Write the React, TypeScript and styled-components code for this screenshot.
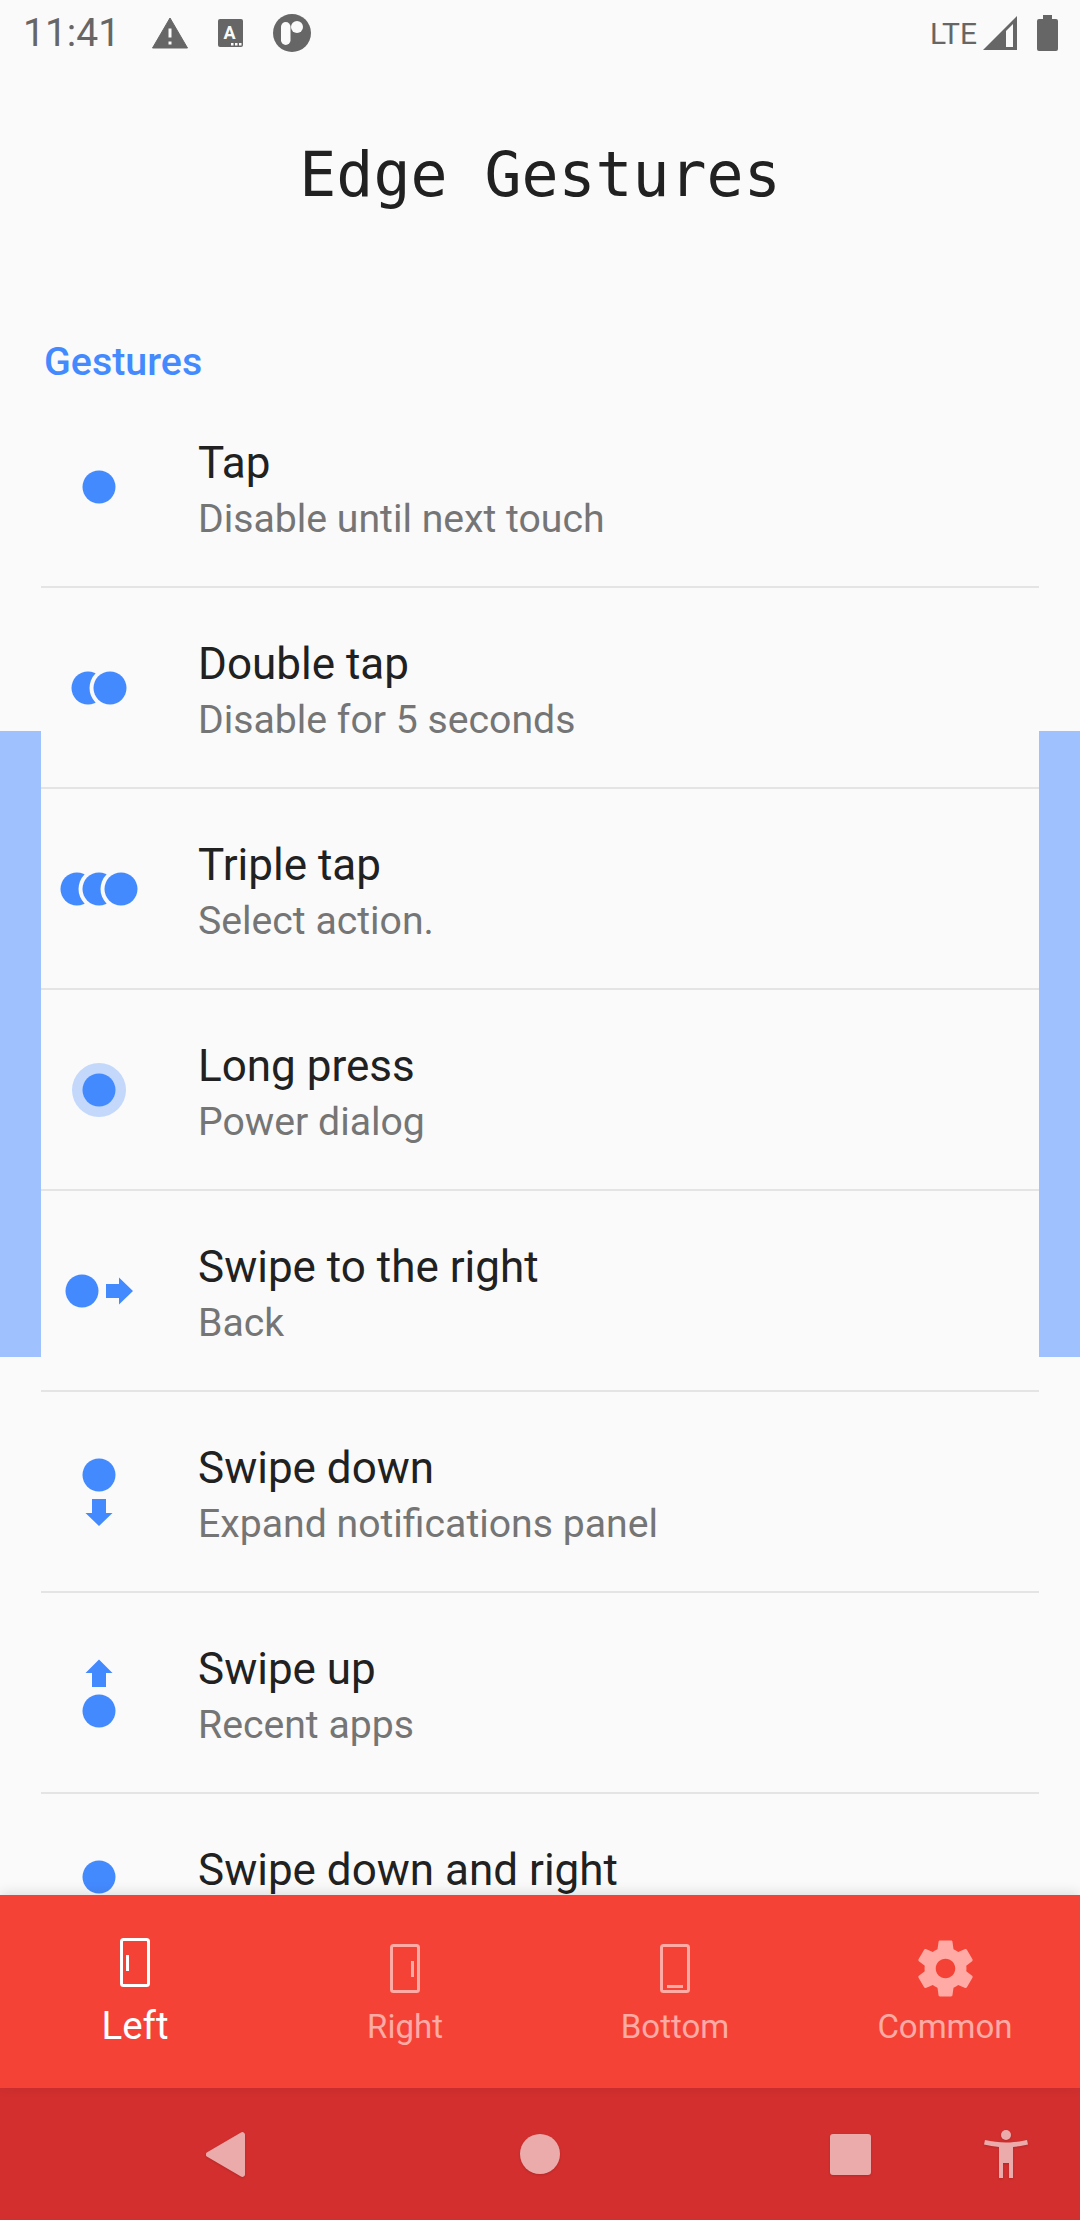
import { FC, ReactNode } from 'react';
import styled, { createGlobalStyle } from 'styled-components';

const BLUE = '#448aff';
const NAV_ICON = '#ebabab';

const GlobalStyle = createGlobalStyle`
	html, body {
		margin: 0;
		padding: 0;
		background: #fafafa;
	}
	body {
		font-family: Roboto, "Liberation Sans", sans-serif;
	}
`;

interface IGesture {
	title: string;
	subtitle?: string;
	icon: ReactNode;
}

const Dot: FC<{cx: number; cy: number}> = ({cx, cy}) => <circle cx={cx} cy={cy} r="16.5"/>;

const GapDot: FC<{cx: number; cy: number}> = ({cx, cy}) => (
	<>
		<circle cx={cx} cy={cy} r="20.5" fill="#fafafa"/>
		<circle cx={cx} cy={cy} r="16.5"/>
	</>
);

const gestures: IGesture[] = [
	{title: 'Tap', subtitle: 'Disable until next touch', icon: <Dot cx={40} cy={40}/>},
	{
		title: 'Double tap',
		subtitle: 'Disable for 5 seconds',
		icon: <><Dot cx={29} cy={40}/><GapDot cx={51} cy={40}/></>,
	},
	{
		title: 'Triple tap',
		subtitle: 'Select action.',
		icon: <><Dot cx={18} cy={40}/><GapDot cx={40} cy={40}/><GapDot cx={62} cy={40}/></>,
	},
	{
		title: 'Long press',
		subtitle: 'Power dialog',
		icon: <><circle cx="40" cy="40" r="27" opacity="0.3"/><Dot cx={40} cy={40}/></>,
	},
	{
		title: 'Swipe to the right',
		subtitle: 'Back',
		icon: <><Dot cx={23} cy={40}/><path d="M47 33h13v-6.500L74 40 60 53.500V47H47z"/></>,
	},
	{
		title: 'Swipe down',
		subtitle: 'Expand notifications panel',
		icon: <><Dot cx={40} cy={23}/><path d="M33 47h14v14h6.500L40 74 26.500 61H33z"/></>,
	},
	{
		title: 'Swipe up',
		subtitle: 'Recent apps',
		icon: <><path d="M33 34h14V20h6.500L40 6.500 26.500 20H33z"/><Dot cx={40} cy={58}/></>,
	},
	{title: 'Swipe down and right', icon: <Dot cx={40} cy={23}/>},
];

const App: FC = () => (
	<Screen>
		<GlobalStyle/>
		<StatusBar>
			<StatusGroup>
				<Clock>11:41</Clock>
				<NotificationIcons>
					<svg width="36" height="32" viewBox="0 0 36 32" fill="#666">
						<path fillRule="evenodd" d="M18 1 35.500 31H.5zM16 11v10h4V11zM16 24v4h4v-4z" strokeLinejoin="round" stroke="#666" strokeWidth="1"/>
					</svg>
					<svg width="25" height="28" viewBox="0 0 25 28">
						<rect width="25" height="28" rx="2" fill="#666"/>
						<text x="11.500" y="20" fontSize="18" fontWeight="700" fontFamily="Roboto" textAnchor="middle" fill="#fafafa">A</text>
						<rect x="13" y="24" width="2.500" height="2.500" fill="#fafafa"/>
						<rect x="17" y="24" width="2.500" height="2.500" fill="#fafafa"/>
						<rect x="21" y="24" width="2.500" height="2.500" fill="#fafafa"/>
					</svg>
					<svg width="38" height="38" viewBox="0 0 38 38">
						<circle cx="19" cy="19" r="19" fill="#666"/>
						<rect x="8" y="8" width="9.500" height="23" rx="4.750" fill="#fafafa"/>
						<circle cx="24" cy="13" r="6" fill="#fafafa"/>
					</svg>
				</NotificationIcons>
			</StatusGroup>
			<StatusGroup>
				<NetworkLabel>LTE</NetworkLabel>
				<SignalIcon width="34" height="34" viewBox="0 0 34 34">
					<path d="M34 0v34H0z" fill="#666"/>
					<path d="M23 15 30 8v23h-7z" fill="#fafafa"/>
				</SignalIcon>
				<BatteryIcon width="21" height="36" viewBox="0 0 21 36" fill="#666">
					<path d="M6 0h9v4h4a2 2 0 0 1 2 2v28a2 2 0 0 1-2 2H2a2 2 0 0 1-2-2V6a2 2 0 0 1 2-2h4z"/>
				</BatteryIcon>
			</StatusGroup>
		</StatusBar>
		<Content>
			<Title>Edge Gestures</Title>
			<SectionHeader>Gestures</SectionHeader>
			<GestureList>
				{gestures.map((gesture) => (
					<GestureRow key={gesture.title}>
						<GestureIcon viewBox="0 0 80 80" fill={BLUE}>
							{gesture.icon}
						</GestureIcon>
						<GestureText>
							<GestureTitle>{gesture.title}</GestureTitle>
							<GestureSubtitle>{gesture.subtitle}</GestureSubtitle>
						</GestureText>
					</GestureRow>
				))}
			</GestureList>
			<EdgeHighlight $side="left"/>
			<EdgeHighlight $side="right"/>
		</Content>
		<TabBar>
			<Tab $active>
				<TabIcon $active width="30" height="49" viewBox="0 0 30 49">
					<rect x="1.500" y="1.500" width="27" height="46" rx="2" fill="none" stroke="currentColor" strokeWidth="3"/>
					<rect x="6" y="17" width="3" height="16" fill="currentColor"/>
				</TabIcon>
				<TabLabel $active>Left</TabLabel>
			</Tab>
			<Tab>
				<TabIcon width="30" height="49" viewBox="0 0 30 49">
					<rect x="1.500" y="1.500" width="27" height="46" rx="2" fill="none" stroke="currentColor" strokeWidth="3"/>
					<rect x="21" y="17" width="3" height="16" fill="currentColor"/>
				</TabIcon>
				<TabLabel>Right</TabLabel>
			</Tab>
			<Tab>
				<TabIcon width="30" height="49" viewBox="0 0 30 49">
					<rect x="1.500" y="1.500" width="27" height="46" rx="2" fill="none" stroke="currentColor" strokeWidth="3"/>
					<rect x="7" y="41" width="16" height="3" fill="currentColor"/>
				</TabIcon>
				<TabLabel>Bottom</TabLabel>
			</Tab>
			<Tab>
				<GearIcon width="67" height="67" viewBox="0 0 24 24">
					<path fill="currentColor" d="M19.430 12.980c.04-.32.07-.64.07-.98s-.03-.66-.07-.98l2.110-1.650c.19-.15.24-.42.12-.64l-2-3.460c-.12-.22-.39-.3-.61-.22l-2.490 1c-.52-.4-1.080-.73-1.690-.98l-.38-2.650C14.460 2.180 14.250 2 14 2h-4c-.25 0-.46.18-.49.42l-.38 2.650c-.61.25-1.170.59-1.690.98l-2.490-1c-.23-.09-.49 0-.61.22l-2 3.460c-.13.22-.07.49.12.64l2.110 1.650c-.04.32-.07.65-.07.98s.03.66.07.98l-2.110 1.650c-.19.15-.24.42-.12.64l2 3.460c.12.22.39.3.61.22l2.490-1c.52.4 1.080.73 1.690.98l.38 2.650c.03.24.24.42.49.42h4c.25 0 .46-.18.49-.42l.38-2.650c.61-.25 1.170-.59 1.690-.98l2.490 1c.23.09.49 0 .61-.22l2-3.460c.12-.22.07-.49-.12-.64l-2.110-1.650zM12 15.500c-1.930 0-3.500-1.570-3.500-3.500s1.570-3.500 3.500-3.500 3.500 1.570 3.500 3.500-1.570 3.500-3.500 3.500z"/>
				</GearIcon>
				<TabLabel>Common</TabLabel>
			</Tab>
		</TabBar>
		<NavBar>
			<NavButton $gap={206}>
				<svg width="39" height="45" viewBox="0 0 39 45" fill={NAV_ICON}>
					<path d="M35 .5 1.200 20.200a2.600 2.600 0 0 0 0 4.600L35 44.500a2.600 2.600 0 0 0 4-2.300V2.800a2.600 2.600 0 0 0-4-2.300z"/>
				</svg>
			</NavButton>
			<NavButton $gap={275}>
				<svg width="40" height="40" viewBox="0 0 40 40" fill={NAV_ICON}>
					<circle cx="20" cy="20" r="20"/>
				</svg>
			</NavButton>
			<NavButton $gap={270}>
				<svg width="41" height="41" viewBox="0 0 41 41" fill={NAV_ICON}>
					<rect width="41" height="41" rx="3"/>
				</svg>
			</NavButton>
			<NavButton $gap={113}>
				<svg width="44" height="48" viewBox="0 0 44 48" fill={NAV_ICON}>
					<circle cx="22" cy="5" r="5"/>
					<path d="M1 10c7 1.500 14 2.500 21 2.500S36 11.500 43 10l1 4.500c-5 1-10 2-15 2.500v31h-4V33h-6v15h-4V17c-5-.5-10-1.500-15-2.500z"/>
				</svg>
			</NavButton>
		</NavBar>
	</Screen>
);

export default App;

const Screen = styled.div`
	width: 1080px;
	height: 2220px;
	display: flex;
	flex-direction: column;
	overflow: hidden;
	background: #fafafa;
`;

const StatusBar = styled.div`
	height: 66px;
	flex-shrink: 0;
	display: flex;
	justify-content: space-between;
	align-items: center;
	padding: 0 22px 0 23px;
	color: #666;
`;

const StatusGroup = styled.div`
	display: flex;
	align-items: center;
`;

const NotificationIcons = styled.div`
	display: flex;
	align-items: center;
	gap: 30px;
	margin-left: 32px;
`;

const Clock = styled.span`
	font-size: 39px;
	font-weight: 400;
`;

const NetworkLabel = styled.span`
	font-size: 30px;
	font-weight: 400;
`;

const SignalIcon = styled.svg`
	margin-left: 6px;
`;

const BatteryIcon = styled.svg`
	margin-left: 20px;
`;

const Content = styled.div`
	position: relative;
	flex: 1;
	min-height: 0;
	overflow: hidden;
`;

const Title = styled.h1`
	margin: 0;
	padding-top: 72px;
	height: 195px;
	box-sizing: border-box;
	font-family: "DejaVu Sans Mono", "Liberation Mono", monospace;
	font-size: 61.5px;
	line-height: 74px;
	font-weight: 400;
	text-align: center;
	color: #212121;
`;

const SectionHeader = styled.div`
	padding: 76px 0 0 44px;
	height: 126px;
	box-sizing: border-box;
	font-size: 39.4px;
	line-height: 50px;
	font-weight: 500;
	color: ${BLUE};
`;

const GestureList = styled.div`
	display: flex;
	flex-direction: column;
`;

const GestureRow = styled.div`
	height: 201px;
	flex-shrink: 0;
	display: flex;
	align-items: center;
	margin: 0 41px;
	box-sizing: border-box;
	border-bottom: 2px solid #e4e4e4;
`;

const GestureIcon = styled.svg`
	width: 80px;
	height: 80px;
	margin-left: 18px;
	flex-shrink: 0;
`;

const GestureText = styled.div`
	margin-left: 59px;
	padding-top: 8px;
	display: flex;
	flex-direction: column;
`;

const GestureTitle = styled.div`
	font-size: 44px;
	line-height: 56px;
	color: #212121;
`;

const GestureSubtitle = styled.div`
	min-height: 56px;
	font-size: 39.2px;
	line-height: 56px;
	color: #757575;
`;

const EdgeHighlight = styled.div<{$side: 'left' | 'right'}>`
	position: absolute;
	top: 665px;
	${({$side}) => $side}: 0;
	width: 41px;
	height: 626px;
	background: #9fc2ff;
`;

const TabBar = styled.div`
	position: relative;
	height: 193px;
	flex-shrink: 0;
	display: grid;
	grid-template-columns: repeat(4, 1fr);
	background: #f44336;
	box-shadow: 0 -2px 12px rgba(0, 0, 0, 0.12);
`;

const Tab = styled.div<{$active?: boolean}>`
	display: flex;
	flex-direction: column;
	align-items: center;
	padding-top: ${({$active}) => ($active ? 43 : 49)}px;
`;

const TabIcon = styled.svg<{$active?: boolean}>`
	display: block;
	color: ${({$active}) => ($active ? '#ffffff' : '#ffaaa4')};
`;

const GearIcon = styled(TabIcon)`
	margin: -9px 0 -9px;
`;

const TabLabel = styled.span<{$active?: boolean}>`
	margin-top: ${({$active}) => ($active ? 17 : 12)}px;
	font-size: ${({$active}) => ($active ? 38.5 : 33)}px;
	line-height: 44px;
	color: ${({$active}) => ($active ? '#ffffff' : '#ffaaa4')};
`;

const NavBar = styled.div`
	height: 132px;
	flex-shrink: 0;
	display: flex;
	align-items: center;
	background: #d32f2f;
`;

const NavButton = styled.div<{$gap: number}>`
	display: flex;
	margin-left: ${({$gap}) => $gap}px;
	filter: drop-shadow(0 1px 1px rgba(0, 0, 0, 0.15));
`;
